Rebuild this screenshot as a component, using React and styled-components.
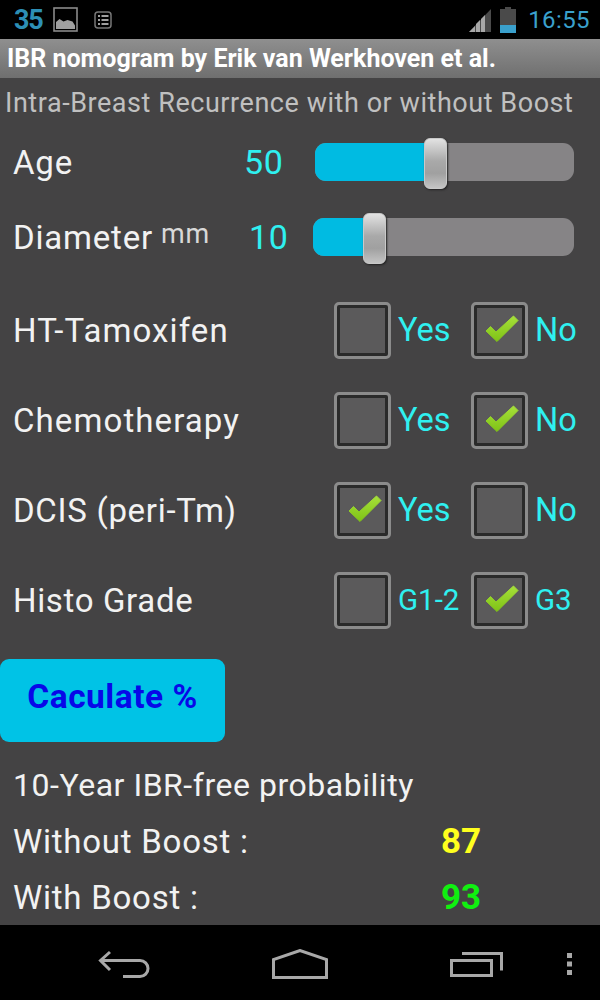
import React from "react";
import styled, { createGlobalStyle } from "styled-components";

const Global = createGlobalStyle`
  html, body { margin: 0; padding: 0; background: #444344; }
  body { font-family: Roboto, "Liberation Sans", sans-serif; }
  * { box-sizing: border-box; }
`;
const Screen = styled.div`
  width: 600px; height: 1000px; display: flex; flex-direction: column;
  background: #444344; overflow: hidden;
`;
const StatusBar = styled.div`
  height: 39px; background: #000; display: flex; align-items: center;
  padding: 0 10px 0 14px; flex: none;
`;
const Count = styled.span`
  font-size: 27px; font-weight: 700; color: #2d8fb5; letter-spacing: -1.2px; width: 39px;
`;
const StatusRight = styled.div`
  margin-left: auto; display: flex; align-items: center;
`;
const Clock = styled.span`
  font-size: 24px; color: #3aa0cc; margin-left: 12px; letter-spacing: .4px;
`;
const Svg = styled.svg`
  display: block; flex: none; margin: ${p => p.$m || 0};
`;
const TitleBar = styled.div`
  height: 39px; flex: none; padding-left: 7px; display: flex; align-items: center;
  background: linear-gradient(#8f8f8f, #6f6f6f);
  color: #fff; font-size: 25px; font-weight: 700; white-space: nowrap;
`;
const Subtitle = styled.div`
  height: 47px; flex: none; padding: 2px 0 0 5px; display: flex; align-items: center;
  color: #c0c0c0; font-size: 27px; white-space: nowrap; letter-spacing: .55px;
`;
const Content = styled.div`
  flex: 1; display: flex; flex-direction: column;
`;
const SliderGroup = styled.div`
  display: flex; flex-direction: column; gap: 1px;
`;
const SliderRow = styled.div`
  height: 74px; display: grid; align-items: center; padding-left: 13px;
  grid-template-columns: ${p => p.$cols};
`;
const Label = styled.span`
  color: #f2f2f2; font-size: ${p => p.$size || 33}px; white-space: nowrap;
  letter-spacing: ${p => p.$ls || .8}px;
`;
const Unit = styled.sup`
  font-size: 27px; color: #d8d8d8; margin-left: 8px; line-height: 0; vertical-align: 6px;
`;
const Value = styled.span`
  color: #2ff0f0; font-size: 34px; letter-spacing: .6px;
`;
const Track = styled.div`
  position: relative; height: 38px; border-radius: 11px; background: #868486; width: ${p => p.$w}px;
`;
const Fill = styled.div`
  height: 100%; border-radius: 11px 0 0 11px; background: #00bbe2;
`;
const Thumb = styled.div`
  position: absolute; top: -5px; width: 23px; height: 51px; border-radius: 6px;
  background: linear-gradient(#e2e2e2, #a9a9a9 45%, #a0a0a0 70%, #c4c4c4);
  border: 1px solid #c9c9c9; box-shadow: 1px 1px 2px #222;
`;
const CheckGroup = styled.div`
  margin-top: 11px; display: flex; flex-direction: column;
`;
const CheckRow = styled.div`
  height: 90px; padding-left: 13px; display: grid; align-items: center;
  grid-template-columns: 321px 57px 80px 57px auto;
`;
const Pair = styled.span`
  color: #2ff0f0; font-size: ${p => p.$small ? 29.5 : 32.5}px; padding-left: 7px; white-space: nowrap;
`;
const Box = styled.div`
  width: 57px; height: 57px; border: 3px solid #8b8b8b; border-radius: 5px; background: #2a2a2a;
  padding: 3px;
`;
const BoxFace = styled.div`
  width: 100%; height: 100%; background: #5b5a5b; display: flex; align-items: center; justify-content: center;
`;
const CalcButton = styled.button`
  margin-top: 14px; width: 225px; height: 83px; border: none;
  border-radius: 9px; background: #00c3e6; color: #0808e8; font: 700 33.5px Roboto, sans-serif;
  letter-spacing: .5px; flex: none; padding: 0 0 8px;
`;
const Results = styled.div`
  margin-top: 15px; display: flex; flex-direction: column;
`;
const ResultRow = styled.div`
  height: 56px; padding-left: 13px; display: grid; align-items: center;
  grid-template-columns: 428px auto;
`;
const Num = styled.span`
  font-size: 35px; font-weight: 700; color: ${p => p.$c};
`;
const NavBar = styled.div`
  height: 75px; flex: none; background: #000;
  display: grid; grid-template-columns: 97px 175px 178px 117px auto; padding-top: 24px;
`;

const Check = () => (
  <Svg $m="0 -1px 3px 3px" width="34" height="28" viewBox="0 0 34 28">
    <defs>
      <linearGradient id="tick" x1="0" y1="0" x2="0" y2="1">
        <stop offset="0" stopColor="#a6e03a" />
        <stop offset="1" stopColor="#7fc216" />
      </linearGradient>
    </defs>
    <path d="M1 16l4.500-4.500 5.500 5.500L28.500 1l4.500 4.500L12 26.500z" fill="url(#tick)" stroke="url(#tick)" strokeWidth="1" strokeLinejoin="round" />
  </Svg>
);
const Checkbox = ({ on }) => <Box><BoxFace>{on && <Check />}</BoxFace></Box>;

const CheckLine = ({ label, a, b, firstOn, small, ls }) => (
  <CheckRow>
    <Label $ls={ls}>{label}</Label>
    <Checkbox on={firstOn} />
    <Pair $small={small}>{a}</Pair>
    <Checkbox on={!firstOn} />
    <Pair $small={small}>{b}</Pair>
  </CheckRow>
);

export default function App() {
  return (
    <Screen>
      <Global />
      <StatusBar>
        <Count>35</Count>
        <Svg width="25" height="25" viewBox="0 0 25 25">
          <rect x="1" y="1" width="23" height="23" fill="#000" stroke="#8a8a8a" strokeWidth="1.6" />
          <path d="M3 22v-7l3.500-3 4 2.500 4-1.500 5 1.500 2.500 4v3.500z" fill="#a0a0a0" />
        </Svg>
        <Svg $m="0 0 0 16px" width="18" height="18" viewBox="0 0 18 18">
          <rect x="1" y="1" width="16" height="16" rx="3" fill="none" stroke="#777" strokeWidth="1.5" />
          <path d="M4 5h2M7.500 5h7M4 9h2M7.500 9h7M4 13h2M7.500 13h7" stroke="#a0a0a0" strokeWidth="2" />
        </Svg>
        <StatusRight>
          <Svg width="22" height="26" viewBox="0 0 22 26">
            <path d="M0 25L22 2v23z" fill="#4a4a4a" />
            <path d="M0 25l6-6v6zM7 25v-8l4-4v12zM12 25V12l4-4v17z" fill="#a8a8a8" />
          </Svg>
          <Svg $m="0 0 0 9px" width="16" height="26" viewBox="0 0 16 26">
            <path d="M5 0h6v2h5v24H0V2h5z" fill="#4a4a4a" />
            <rect y="18" width="16" height="8" fill="#3aa0cc" />
          </Svg>
          <Clock>16:55</Clock>
        </StatusRight>
      </StatusBar>
      <TitleBar>IBR nomogram by Erik van Werkhoven et al.</TitleBar>
      <Subtitle>Intra-Breast Recurrence with or without Boost</Subtitle>
      <Content>
        <SliderGroup>
          <SliderRow $cols="231px 71px auto">
            <Label>Age</Label>
            <Value>50</Value>
            <Track $w={259}>
              <Fill style={{ width: 115 }} />
              <Thumb style={{ left: 109 }} />
            </Track>
          </SliderRow>
          <SliderRow $cols="236px 64px auto">
            <Label>Diameter<Unit>mm</Unit></Label>
            <Value>10</Value>
            <Track $w={261}>
              <Fill style={{ width: 56 }} />
              <Thumb style={{ left: 50 }} />
            </Track>
          </SliderRow>
        </SliderGroup>
        <CheckGroup>
          <CheckLine label="HT-Tamoxifen" a="Yes" b="No" ls={1.1} />
          <CheckLine label="Chemotherapy" a="Yes" b="No" ls={1.1} />
          <CheckLine label="DCIS (peri-Tm)" a="Yes" b="No" firstOn ls={.7} />
          <CheckLine label="Histo Grade" a="G1-2" b="G3" small ls={.65} />
        </CheckGroup>
        <CalcButton>Caculate %</CalcButton>
        <Results>
          <ResultRow><Label $size={32} $ls={.53}>10-Year IBR-free probability</Label></ResultRow>
          <ResultRow><Label $ls={.75}>Without Boost :</Label><Num $c="#ffff1e">87</Num></ResultRow>
          <ResultRow><Label $ls={.75}>With Boost :</Label><Num $c="#10f010">93</Num></ResultRow>
        </Results>
      </Content>
      <NavBar>
        <span />
        <Svg width="54" height="30" viewBox="0 0 54 30">
          <path d="M13 3L3.500 11.500l9.500 9.500M3.500 11.500H43a8 8 0 0 1 0 16H26" fill="none" stroke="#a8a8a8" strokeWidth="3" />
        </Svg>
        <Svg width="56" height="30" viewBox="0 0 56 30">
          <path d="M1.500 28.500V10.500L28 1.500l26.500 9v18z" fill="none" stroke="#a8a8a8" strokeWidth="3" />
        </Svg>
        <Svg width="54" height="30" viewBox="0 0 54 30">
          <path d="M12 4.500h39.500v17" fill="none" stroke="#a8a8a8" strokeWidth="3" />
          <rect x="1.500" y="11.500" width="40" height="15" fill="#000" stroke="#a8a8a8" strokeWidth="3" />
        </Svg>
        <Svg $m="4px 0 0" width="5" height="22" viewBox="0 0 5 22">
          <path d="M0 0h5v5H0zM0 8.500h5v5H0zM0 17h5v5H0z" fill="#a8a8a8" />
        </Svg>
      </NavBar>
    </Screen>
  );
}
